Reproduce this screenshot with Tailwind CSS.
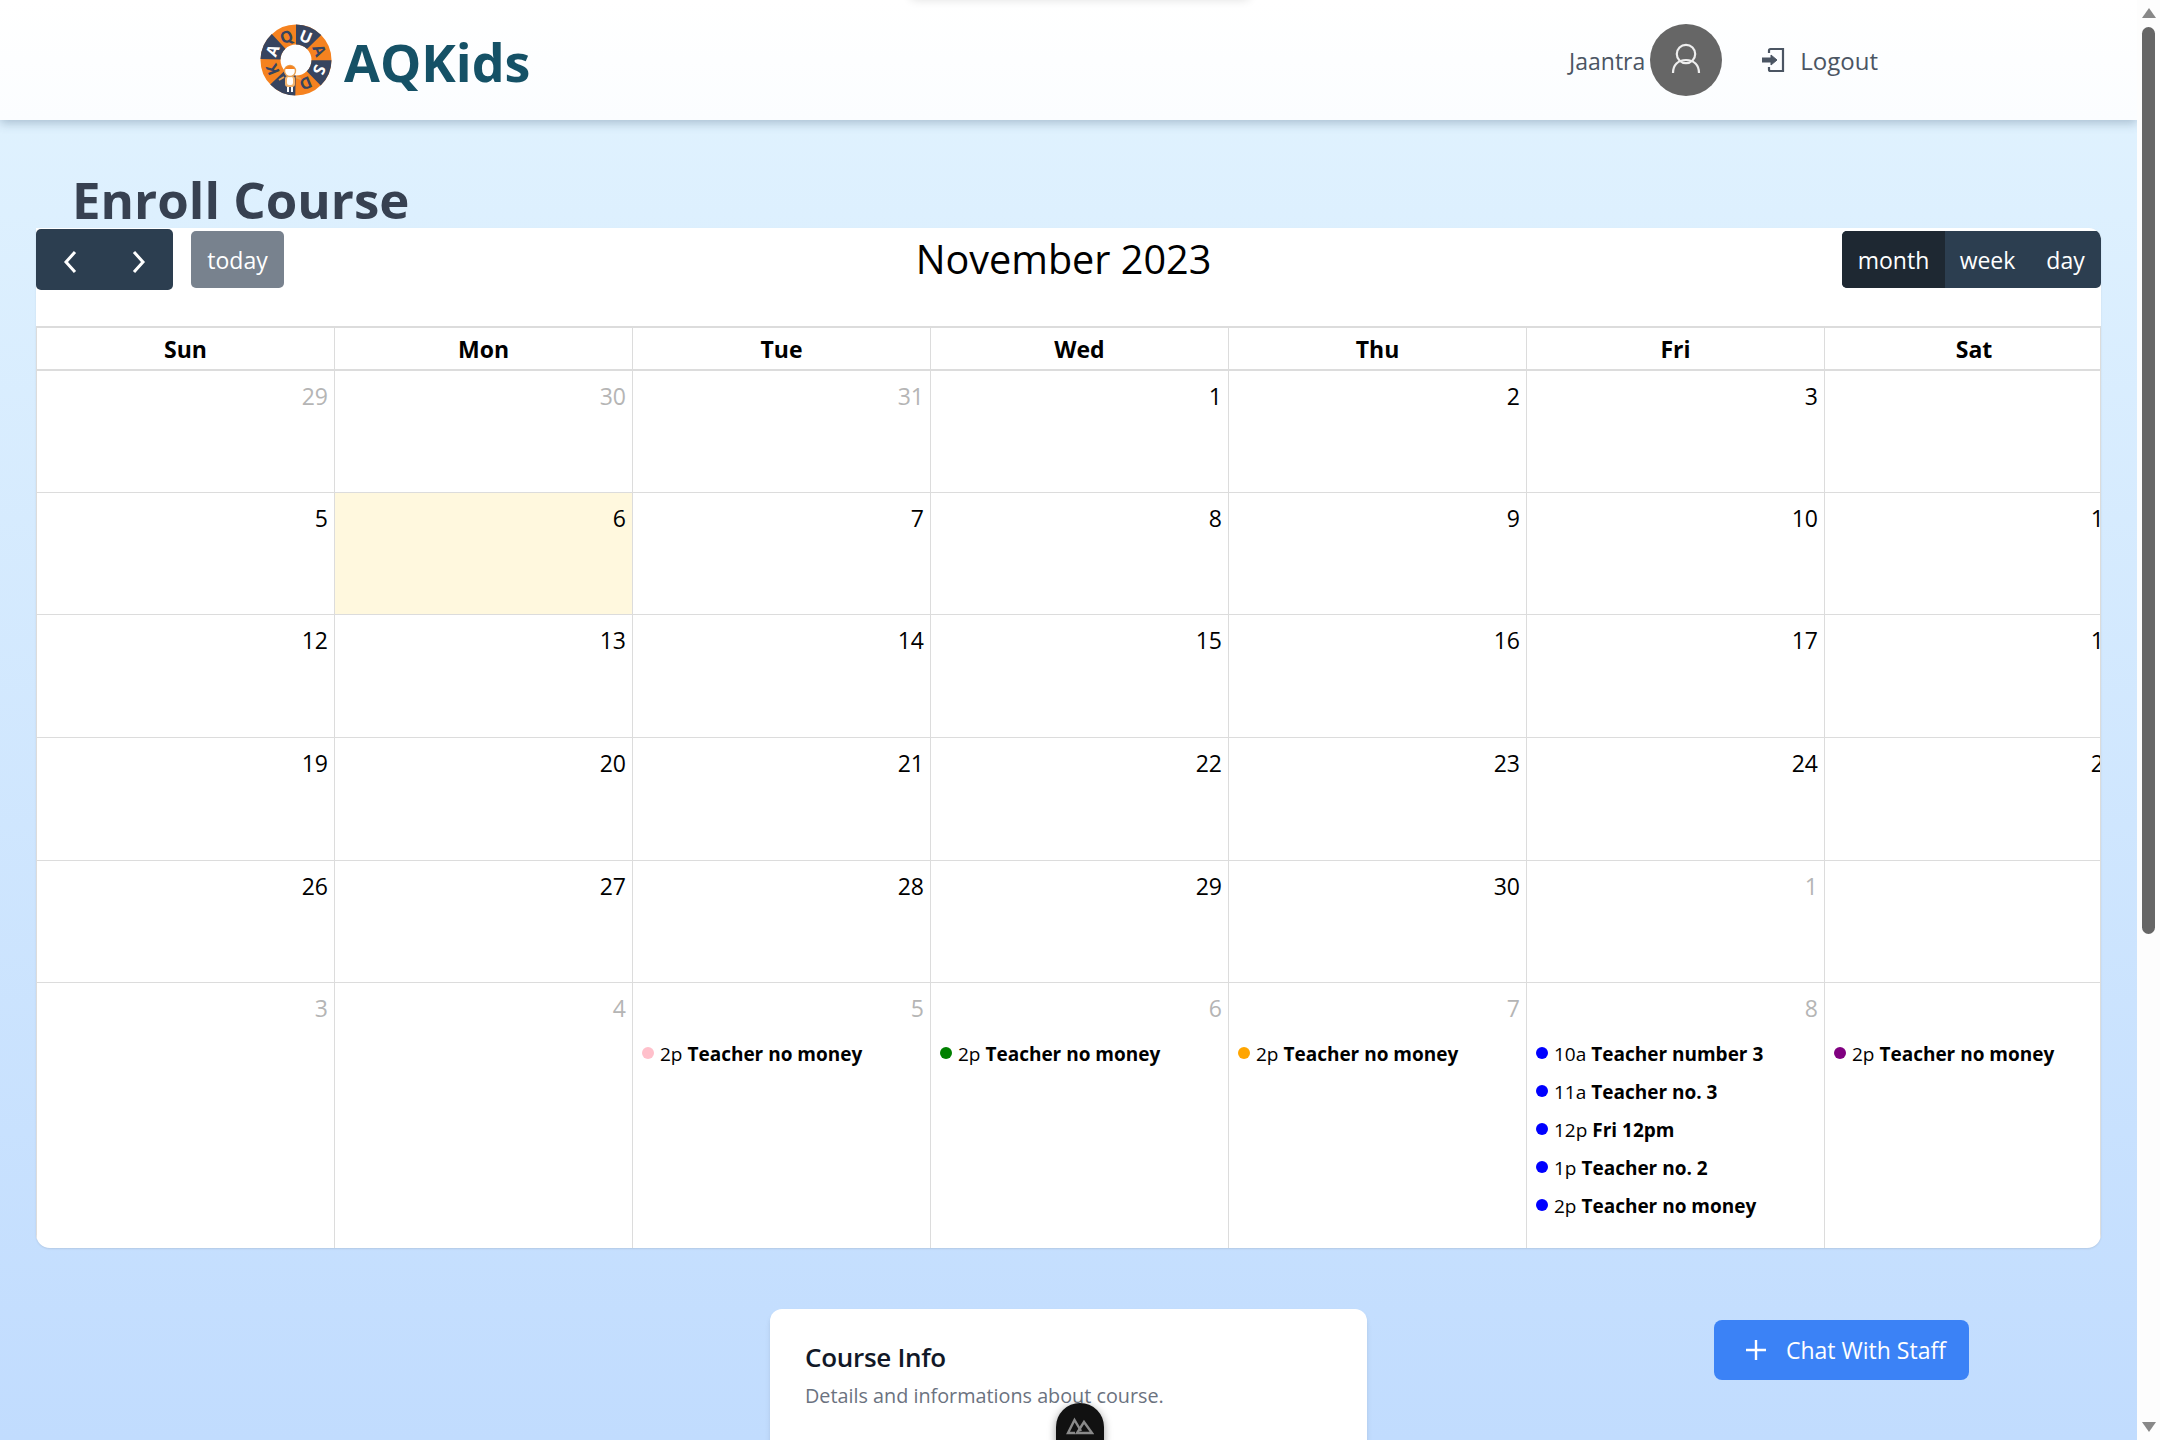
<!DOCTYPE html>
<html lang="en">
<head>
  <meta charset="UTF-8" />
  <title>AQKids - Enroll Course</title>
  <script src="https://cdn.jsdelivr.net/npm/@tailwindcss/browser@4"></script>
</head>
<body class="h-screen overflow-hidden flex font-['Open_Sans',sans-serif] bg-[#fdfdfd]">
  <!-- page -->
  <div class="relative w-[2137px] h-[1440px] overflow-hidden bg-gradient-to-b from-[#e0f2fe] from-[6%] to-[#c1dcfe]">
    <!-- navbar -->
    <header class="h-[120px] bg-gradient-to-b from-white to-[#fbfdff] shadow-[0_3px_10px_rgba(40,70,100,0.3)] flex items-center pl-[260px] pr-[259px]">
      <svg class="w-[72px] h-[72px] mr-[12px]" viewBox="-36 -36 72 72">
        <circle r="25.5" fill="none" stroke="#f58220" stroke-width="20" />
        <circle r="25.5" fill="none" stroke="#37445f" stroke-width="20" stroke-dasharray="20.03 20.03" transform="rotate(-90)" />
        <g fill="#fff" font-family="Open Sans" font-weight="700" font-size="16" text-anchor="middle">
          <text transform="rotate(22.5) translate(0 -19.500)">U</text>
          <text transform="rotate(67.5) translate(0 -19.500)" fill="#37445f">A</text>
          <text transform="rotate(112.5) translate(0 -19.500)">S</text>
          <text transform="rotate(157.5) translate(0 -19.500)" fill="#37445f">D</text>
          <text transform="rotate(-22.5) translate(0 -19.500)" fill="#37445f">Q</text>
          <text transform="rotate(-67.5) translate(0 -19.500)">A</text>
          <text transform="rotate(-112.5) translate(0 -19.500)" fill="#37445f">K</text>
        </g>
        <!-- mascot -->
        <path d="M-12 17l-5 3M0 17l5 2" stroke="#e8a050" stroke-width="2" />
        <rect x="-11" y="16" width="10" height="11" rx="3" fill="#f5b56e" />
        <rect x="-9" y="17" width="6" height="8" rx="2" fill="#fff" />
        <circle cx="-6" cy="11" r="5.5" fill="#fff" stroke="#e8a050" stroke-width="1.4" />
        <path d="M-11 9a5.5 5.5 0 0 1 10 0z" fill="#f58220" />
        <path d="M-8 27v5M-4 27v5" stroke="#fff" stroke-width="2" />
      </svg>
      <span class="text-[#155166] text-[52px] font-bold leading-none mt-[3px]">AQKids</span>
      <div class="ml-auto flex items-center">
        <span class="text-[#4b5563] text-[23px] mr-[5px] mt-[2px]">Jaantra</span>
        <div class="w-[72px] h-[72px] rounded-full bg-[#666] flex items-center justify-center">
          <svg class="w-[36px] h-[36px]" viewBox="0 0 36 36" fill="none" stroke="#eeeeee" stroke-width="2.2"><circle cx="18" cy="12" r="9.2" /><path d="M5 31c0-8 5-13 13-13s13 5 13 13" /></svg>
        </div>
        <svg class="w-[24px] h-[26px] ml-[39px] mr-[15px]" viewBox="0 0 24 26" fill="none" stroke="#4b5563" stroke-width="2.2"><path d="M8 6V3.5A1.5 1.5 0 0 1 9.5 2H22v22H9.500A1.500 1.500 0 0 1 8 22.500V20" /><path d="M1 13h9" stroke-width="5" /><path d="M10 8l6 5-6 5z" fill="#4b5563" stroke-width="1" /></svg>
        <span class="text-[#4b5563] text-[24px] font-medium mt-[2px]">Logout</span>
      </div>
    </header>

    <!-- faint shadow of a panel hidden above the viewport -->
    <div class="absolute left-[910px] top-[-10px] w-[340px] h-[10px] rounded-full shadow-[0_0_10px_rgba(0,0,0,0.12)]"></div>

    <h1 class="pl-[72px] pt-[50px] h-[108px] text-[#374151] text-[51px] font-bold leading-[59px]">Enroll Course</h1>

    <!-- calendar -->
    <section class="relative mx-[36px] w-[2065px] h-[1020px] bg-white rounded-tr-[12px] rounded-b-[14px] overflow-hidden shadow-[0_1px_2px_rgba(0,0,0,0.1)]">
      <div class="relative h-[98px]">
        <div class="absolute left-0 top-[1px] w-[137px] h-[61px] rounded-[5px] bg-[#2c3e50] flex items-center justify-between px-[22px]">
          <svg class="w-[24px] h-[24px] mt-[4px]" viewBox="0 0 24 24" fill="none" stroke="#fff" stroke-width="3"><path d="M17 2L8 12l9 10" /></svg>
          <svg class="w-[24px] h-[24px] mt-[4px]" viewBox="0 0 24 24" fill="none" stroke="#fff" stroke-width="3"><path d="M7 2l9 10-9 10" /></svg>
        </div>
        <div class="absolute left-[155px] top-[3px] w-[93px] h-[57px] rounded-[5px] bg-[#78828e] text-white text-[23px] pt-[2px] flex items-center justify-center">today</div>
        <h2 class="absolute left-0 right-[10px] top-[3px] h-[57px] flex items-center justify-center text-[39.6px] text-black">November 2023</h2>
        <div class="absolute right-0 top-[3px] h-[57px] w-[259px] rounded-[5px] bg-[#2c3e50] text-white text-[23px] flex overflow-hidden">
          <span class="w-[103px] pt-[2px] bg-[#1e2832] flex items-center justify-center">month</span>
          <span class="w-[85px] pt-[2px] flex items-center justify-center">week</span>
          <span class="w-[71px] pt-[2px] flex items-center justify-center">day</span>
        </div>
      </div>

      <!-- table -->
      <div class="grid grid-cols-[repeat(7,298px)] grid-rows-[43px_122px_122px_123px_123px_122px_265px] w-[2087px] border-t-2 border-l border-[#dcdcdc] text-black">
        <div class="flex items-center justify-center pt-[2px] border-b-2 border-r border-[#dcdcdc] text-[23px] font-bold">Sun</div>
        <div class="flex items-center justify-center pt-[2px] border-b-2 border-r border-[#dcdcdc] text-[23px] font-bold">Mon</div>
        <div class="flex items-center justify-center pt-[2px] border-b-2 border-r border-[#dcdcdc] text-[23px] font-bold">Tue</div>
        <div class="flex items-center justify-center pt-[2px] border-b-2 border-r border-[#dcdcdc] text-[23px] font-bold">Wed</div>
        <div class="flex items-center justify-center pt-[2px] border-b-2 border-r border-[#dcdcdc] text-[23px] font-bold">Thu</div>
        <div class="flex items-center justify-center pt-[2px] border-b-2 border-r border-[#dcdcdc] text-[23px] font-bold">Fri</div>
        <div class="flex items-center justify-center pt-[2px] border-b-2 border-[#dcdcdc] text-[23px] font-bold">Sat</div>

        <div class="border-b border-r border-[#dcdcdc] text-right pr-[6px] pt-[7px] text-[23px] leading-[36px] text-[#b5b5b5]">29</div>
        <div class="border-b border-r border-[#dcdcdc] text-right pr-[6px] pt-[7px] text-[23px] leading-[36px] text-[#b5b5b5]">30</div>
        <div class="border-b border-r border-[#dcdcdc] text-right pr-[6px] pt-[7px] text-[23px] leading-[36px] text-[#b5b5b5]">31</div>
        <div class="border-b border-r border-[#dcdcdc] text-right pr-[6px] pt-[7px] text-[23px] leading-[36px]">1</div>
        <div class="border-b border-r border-[#dcdcdc] text-right pr-[6px] pt-[7px] text-[23px] leading-[36px]">2</div>
        <div class="border-b border-r border-[#dcdcdc] text-right pr-[6px] pt-[7px] text-[23px] leading-[36px]">3</div>
        <div class="border-b border-[#dcdcdc] text-right pr-[6px] pt-[7px] text-[23px] leading-[36px]">4</div>

        <div class="border-b border-r border-[#dcdcdc] text-right pr-[6px] pt-[7px] text-[23px] leading-[36px]">5</div>
        <div class="border-b border-r border-[#dcdcdc] bg-[#fff8de] text-right pr-[6px] pt-[7px] text-[23px] leading-[36px]">6</div>
        <div class="border-b border-r border-[#dcdcdc] text-right pr-[6px] pt-[7px] text-[23px] leading-[36px]">7</div>
        <div class="border-b border-r border-[#dcdcdc] text-right pr-[6px] pt-[7px] text-[23px] leading-[36px]">8</div>
        <div class="border-b border-r border-[#dcdcdc] text-right pr-[6px] pt-[7px] text-[23px] leading-[36px]">9</div>
        <div class="border-b border-r border-[#dcdcdc] text-right pr-[6px] pt-[7px] text-[23px] leading-[36px]">10</div>
        <div class="border-b border-[#dcdcdc] text-right pr-[6px] pt-[7px] text-[23px] leading-[36px]">11</div>

        <div class="border-b border-r border-[#dcdcdc] text-right pr-[6px] pt-[7px] text-[23px] leading-[36px]">12</div>
        <div class="border-b border-r border-[#dcdcdc] text-right pr-[6px] pt-[7px] text-[23px] leading-[36px]">13</div>
        <div class="border-b border-r border-[#dcdcdc] text-right pr-[6px] pt-[7px] text-[23px] leading-[36px]">14</div>
        <div class="border-b border-r border-[#dcdcdc] text-right pr-[6px] pt-[7px] text-[23px] leading-[36px]">15</div>
        <div class="border-b border-r border-[#dcdcdc] text-right pr-[6px] pt-[7px] text-[23px] leading-[36px]">16</div>
        <div class="border-b border-r border-[#dcdcdc] text-right pr-[6px] pt-[7px] text-[23px] leading-[36px]">17</div>
        <div class="border-b border-[#dcdcdc] text-right pr-[6px] pt-[7px] text-[23px] leading-[36px]">18</div>

        <div class="border-b border-r border-[#dcdcdc] text-right pr-[6px] pt-[7px] text-[23px] leading-[36px]">19</div>
        <div class="border-b border-r border-[#dcdcdc] text-right pr-[6px] pt-[7px] text-[23px] leading-[36px]">20</div>
        <div class="border-b border-r border-[#dcdcdc] text-right pr-[6px] pt-[7px] text-[23px] leading-[36px]">21</div>
        <div class="border-b border-r border-[#dcdcdc] text-right pr-[6px] pt-[7px] text-[23px] leading-[36px]">22</div>
        <div class="border-b border-r border-[#dcdcdc] text-right pr-[6px] pt-[7px] text-[23px] leading-[36px]">23</div>
        <div class="border-b border-r border-[#dcdcdc] text-right pr-[6px] pt-[7px] text-[23px] leading-[36px]">24</div>
        <div class="border-b border-[#dcdcdc] text-right pr-[6px] pt-[7px] text-[23px] leading-[36px]">25</div>

        <div class="border-b border-r border-[#dcdcdc] text-right pr-[6px] pt-[7px] text-[23px] leading-[36px]">26</div>
        <div class="border-b border-r border-[#dcdcdc] text-right pr-[6px] pt-[7px] text-[23px] leading-[36px]">27</div>
        <div class="border-b border-r border-[#dcdcdc] text-right pr-[6px] pt-[7px] text-[23px] leading-[36px]">28</div>
        <div class="border-b border-r border-[#dcdcdc] text-right pr-[6px] pt-[7px] text-[23px] leading-[36px]">29</div>
        <div class="border-b border-r border-[#dcdcdc] text-right pr-[6px] pt-[7px] text-[23px] leading-[36px]">30</div>
        <div class="border-b border-r border-[#dcdcdc] text-right pr-[6px] pt-[7px] text-[23px] leading-[36px] text-[#b5b5b5]">1</div>
        <div class="border-b border-[#dcdcdc] text-right pr-[6px] pt-[7px] text-[23px] leading-[36px] text-[#b5b5b5]">2</div>

        <div class="border-r border-[#dcdcdc] text-right pr-[6px] pt-[7px] text-[23px] leading-[36px] text-[#b5b5b5]">3</div>
        <div class="border-r border-[#dcdcdc] text-right pr-[6px] pt-[7px] text-[23px] leading-[36px] text-[#b5b5b5]">4</div>
        <div class="border-r border-[#dcdcdc] pt-[7px]">
          <div class="text-right pr-[6px] text-[23px] leading-[36px] text-[#b5b5b5]">5</div>
          <div class="mt-[13px] flex flex-col gap-[8px] text-[19px] leading-[30px]">
            <div class="flex items-center pl-[9px] whitespace-nowrap"><i class="w-[12px] h-[12px] rounded-full bg-[#ffc0cb] mr-[6px] -mt-[3px]"></i><span>2p&nbsp;<b>Teacher no money</b></span></div>
          </div>
        </div>
        <div class="border-r border-[#dcdcdc] pt-[7px]">
          <div class="text-right pr-[6px] text-[23px] leading-[36px] text-[#b5b5b5]">6</div>
          <div class="mt-[13px] flex flex-col gap-[8px] text-[19px] leading-[30px]">
            <div class="flex items-center pl-[9px] whitespace-nowrap"><i class="w-[12px] h-[12px] rounded-full bg-[#008000] mr-[6px] -mt-[3px]"></i><span>2p&nbsp;<b>Teacher no money</b></span></div>
          </div>
        </div>
        <div class="border-r border-[#dcdcdc] pt-[7px]">
          <div class="text-right pr-[6px] text-[23px] leading-[36px] text-[#b5b5b5]">7</div>
          <div class="mt-[13px] flex flex-col gap-[8px] text-[19px] leading-[30px]">
            <div class="flex items-center pl-[9px] whitespace-nowrap"><i class="w-[12px] h-[12px] rounded-full bg-[#ffa500] mr-[6px] -mt-[3px]"></i><span>2p&nbsp;<b>Teacher no money</b></span></div>
          </div>
        </div>
        <div class="border-r border-[#dcdcdc] pt-[7px]">
          <div class="text-right pr-[6px] text-[23px] leading-[36px] text-[#b5b5b5]">8</div>
          <div class="mt-[13px] flex flex-col gap-[8px] text-[19px] leading-[30px]">
            <div class="flex items-center pl-[9px] whitespace-nowrap"><i class="w-[12px] h-[12px] rounded-full bg-[#0000ff] mr-[6px] -mt-[3px]"></i><span>10a&nbsp;<b>Teacher number 3</b></span></div>
            <div class="flex items-center pl-[9px] whitespace-nowrap"><i class="w-[12px] h-[12px] rounded-full bg-[#0000ff] mr-[6px] -mt-[3px]"></i><span>11a&nbsp;<b>Teacher no. 3</b></span></div>
            <div class="flex items-center pl-[9px] whitespace-nowrap"><i class="w-[12px] h-[12px] rounded-full bg-[#0000ff] mr-[6px] -mt-[3px]"></i><span>12p&nbsp;<b>Fri 12pm</b></span></div>
            <div class="flex items-center pl-[9px] whitespace-nowrap"><i class="w-[12px] h-[12px] rounded-full bg-[#0000ff] mr-[6px] -mt-[3px]"></i><span>1p&nbsp;<b>Teacher no. 2</b></span></div>
            <div class="flex items-center pl-[9px] whitespace-nowrap"><i class="w-[12px] h-[12px] rounded-full bg-[#0000ff] mr-[6px] -mt-[3px]"></i><span>2p&nbsp;<b>Teacher no money</b></span></div>
          </div>
        </div>
        <div class="pt-[7px]">
          <div class="text-right pr-[6px] text-[23px] leading-[36px] text-[#b5b5b5]">9</div>
          <div class="mt-[13px] flex flex-col gap-[8px] text-[19px] leading-[30px]">
            <div class="flex items-center pl-[9px] whitespace-nowrap"><i class="w-[12px] h-[12px] rounded-full bg-[#800080] mr-[6px] -mt-[3px]"></i><span>2p&nbsp;<b>Teacher no money</b></span></div>
          </div>
        </div>
      </div>
      <div class="absolute right-0 top-[98px] bottom-0 w-px bg-[#dcdcdc]"></div>
    </section>

    <!-- below the calendar -->
    <div class="relative h-[132px]">
      <div class="absolute left-[770px] top-[61px] w-[597px] h-[200px] bg-white rounded-[12px] shadow-md px-[35px] pt-[30px]">
        <h3 class="text-[#111827] text-[26px] font-semibold leading-[36px] tracking-[-0.3px]">Course Info</h3>
        <p class="text-[#6b7280] text-[19.8px] leading-[30px] mt-[6px]">Details and informations about course.</p>
      </div>
      <button class="absolute left-[1714px] top-[72px] w-[255px] h-[60px] rounded-[8px] bg-[#3b82f6] text-white text-[23px] flex items-center pl-[30px] gap-[18px]">
        <svg class="w-[24px] h-[24px]" viewBox="0 0 24 24" fill="none" stroke="#fff" stroke-width="2.4"><path d="M12 2v20M2 12h20" /></svg>
        Chat With Staff
      </button>
    </div>

    <!-- devtools pill -->
    <div class="absolute left-[1056px] top-[1403px] w-[48px] h-[60px] rounded-full bg-[#111] shadow-[0_2px_8px_rgba(0,0,0,0.4)] flex justify-center pt-[14px]">
      <svg class="w-[28px] h-[18px]" viewBox="0 0 28 18" fill="none" stroke="#8a8a8a" stroke-width="2.4"><path d="M9 16H2L8.500 3 15 14" /><path d="M11 16h15L18 5z" /></svg>
    </div>
  </div>

  <!-- scrollbar -->
  <div class="relative w-[23px] h-[1440px] bg-[#fdfdfd]">
    <div class="absolute left-[5px] top-[8px] w-0 h-0 border-x-[7px] border-x-transparent border-b-[10px] border-b-[#888]"></div>
    <div class="absolute left-[5px] top-[27px] w-[13px] h-[907px] rounded-full bg-[#666]"></div>
    <div class="absolute left-[5px] bottom-[8px] w-0 h-0 border-x-[7px] border-x-transparent border-t-[10px] border-t-[#888]"></div>
  </div>
</body>
</html>
